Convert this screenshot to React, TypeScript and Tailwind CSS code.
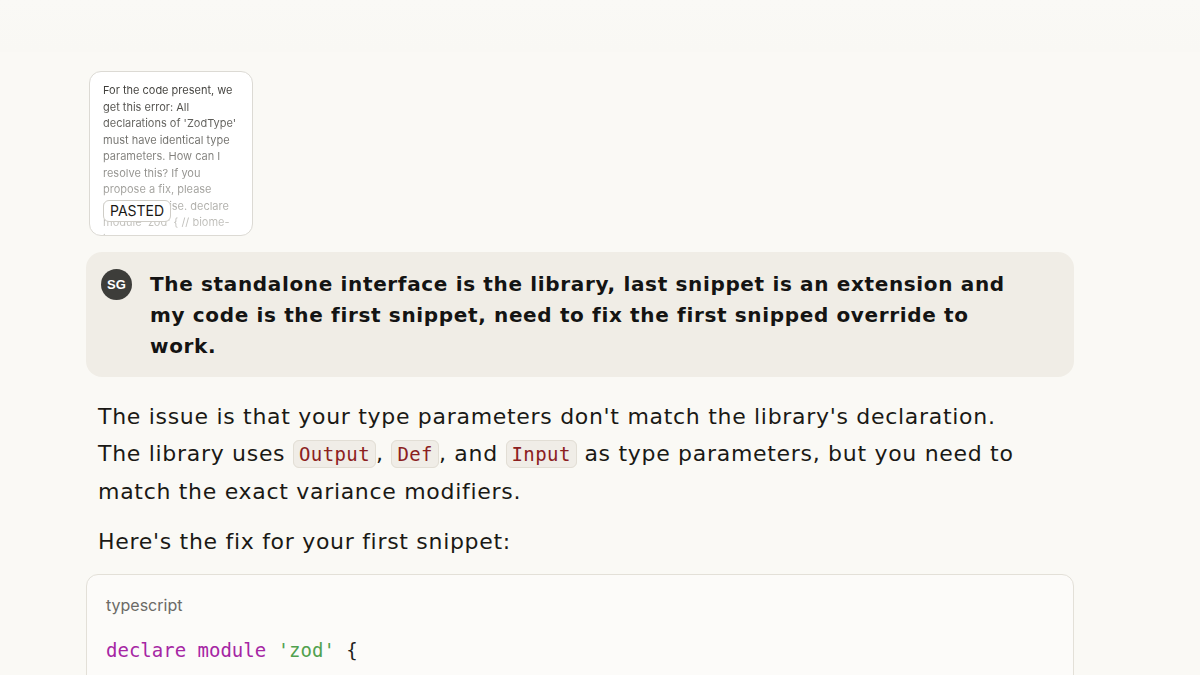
import React from "react";

const mainFont = { fontFamily: '"DejaVu Sans", "Noto Sans", sans-serif' };

function InlineCode({ children }: { children: React.ReactNode }) {
  return (
    <code className="rounded-[6px] border border-[#e2ded5] bg-[#f0ede7] px-[5px] py-[2px] font-['DejaVu_Sans_Mono',monospace] text-[19px] tracking-[0.4px] text-[#8b2020]">
      {children}
    </code>
  );
}

export default function App() {
  return (
    <div className="h-[675px] w-[1200px] overflow-hidden bg-[#faf9f5] text-[#1a1915]">
      <div className="h-[52px] bg-gradient-to-b from-[#faf9f6] to-[#f9f8f4]" />
      <div className="ml-[86px] w-[988px]">
        {/* pasted card */}
        <div className="relative ml-[3px] mt-[19px] h-[165px] w-[164px] overflow-hidden rounded-[12px] border border-[#dcdad4] bg-white pl-[13px] pr-[12px] pt-[10px]">
          <p
            className="bg-gradient-to-b from-[#3a3935] via-[#8a8985] to-[#d6d5d0] bg-clip-text text-[11px] leading-[16.5px] text-transparent"
            style={{ fontFamily: 'Inter, "Noto Sans", sans-serif' }}
          >
            For the code present, we get this error: All declarations of 'ZodType' must have identical type parameters. How can I resolve this? If you propose a fix, please make it concise. declare module 'zod' {'{'} // biome-ignore
          </p>
          <div
            className="absolute left-[13px] top-[128px] rounded-[6px] border border-[#cfcdc7] bg-white px-[6px] text-[14px] leading-[20px] text-[#1a1915]"
            style={{ fontFamily: 'Inter, "Noto Sans", sans-serif' }}
          >
            PASTED
          </div>
        </div>

        {/* user bubble */}
        <div className="mt-[16px] flex items-start gap-[18px] rounded-[16px] bg-[#f0ede6] pb-[15px] pl-[15px] pr-[54px] pt-[17px]">
          <div
            className="flex h-[31px] w-[31px] shrink-0 items-center justify-center rounded-full bg-[#3d3d3a] text-[13px] font-bold text-white"
            style={{ fontFamily: '"Liberation Sans", Arial, sans-serif' }}
          >
            SG
          </div>
          <p className="text-[20px] font-bold leading-[31px] tracking-[0.65px] text-[#141413]" style={mainFont}>
            The standalone interface is the library, last snippet is an extension and my code is the first snippet, need to fix the first snipped override to work.
          </p>
        </div>

        {/* assistant */}
        <div className="pl-[12px] pr-[46px]" style={mainFont}>
          <p className="mt-[21px] text-[22px] leading-[37px] tracking-[0.7px]">
            The issue is that your type parameters don't match the library's declaration. The library uses <InlineCode>Output</InlineCode>, <InlineCode>Def</InlineCode>, and <InlineCode>Input</InlineCode> as type parameters, but you need to match the exact variance modifiers.
          </p>
          <p className="mt-[13px] text-[22px] leading-[37px] tracking-[0.7px]">Here's the fix for your first snippet:</p>
        </div>

        {/* code block */}
        <div className="mt-[14px] h-[200px] rounded-[12px] border border-[#e3e0d8] bg-[#fcfbf9] px-[19px] pt-[18px]">
          <div className="text-[16px] leading-[24px] text-[#6b6a66]" style={{ fontFamily: 'Inter, "Noto Sans", sans-serif' }}>
            typescript
          </div>
          <pre className="mt-[16px] text-[19px] leading-[34px]" style={{ fontFamily: '"DejaVu Sans Mono", monospace' }}>
            <span className="text-[#a626a4]">declare</span> <span className="text-[#a626a4]">module</span>{" "}
            <span className="text-[#50a14f]">'zod'</span> <span className="text-[#1f1e1d]">{"{"}</span>
            {"\n"}
            {"  "}<span className="text-[#a0a1a7]">// biome-ignore lint/correctness/noUnusedVariables: needed</span>
          </pre>
        </div>
      </div>
    </div>
  );
}
